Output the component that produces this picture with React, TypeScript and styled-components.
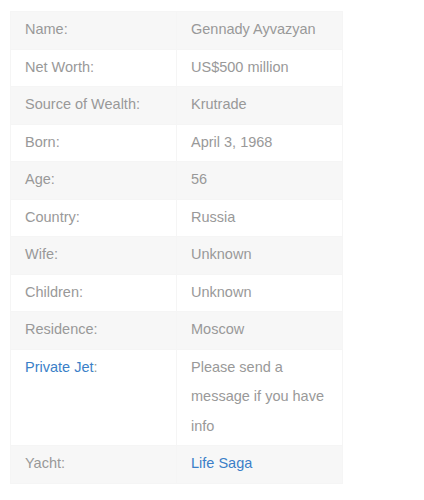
import React from "react";
import styled, { createGlobalStyle } from "styled-components";

const Global = createGlobalStyle`
  body {
    margin: 0;
    background: #ffffff;
    font-family: "Liberation Sans", Arial, sans-serif;
  }
`;

const Page = styled.div`
  padding: 11px 10px;
`;

const Table = styled.table`
  width: 333px;
  border-collapse: collapse;
  table-layout: fixed;
  font-family: "Liberation Sans", Arial, sans-serif;
  font-size: 14.5px;
  line-height: 29.5px;
  color: #999999;
`;

const Row = styled.tr<{ $shade: boolean }>`
  background: ${(p) => (p.$shade ? "#f7f7f7" : "#ffffff")};
`;

const Cell = styled.td`
  width: 50%;
  padding: 3px 13px 4px 14px;
  vertical-align: top;
  border: 1px solid #f5f5f5;
`;

const Link = styled.a`
  color: #3b7fc8;
  text-decoration: none;
`;

type Item = { label: React.ReactNode; value: React.ReactNode };

const items: Item[] = [
  { label: "Name:", value: "Gennady Ayvazyan" },
  { label: "Net Worth:", value: "US$500 million" },
  { label: "Source of Wealth:", value: "Krutrade" },
  { label: "Born:", value: "April 3, 1968" },
  { label: "Age:", value: "56" },
  { label: "Country:", value: "Russia" },
  { label: "Wife:", value: "Unknown" },
  { label: "Children:", value: "Unknown" },
  { label: "Residence:", value: "Moscow" },
  {
    label: (
      <>
        <Link href="#">Private Jet</Link>:
      </>
    ),
    value: "Please send a message if you have info",
  },
  { label: "Yacht:", value: <Link href="#">Life Saga</Link> },
];

export default function App() {
  return (
    <>
      <Global />
      <Page>
        <Table>
          <tbody>
            {items.map((it, i) => (
              <Row key={i} $shade={i % 2 === 0}>
                <Cell>{it.label}</Cell>
                <Cell>{it.value}</Cell>
              </Row>
            ))}
          </tbody>
        </Table>
      </Page>
    </>
  );
}
